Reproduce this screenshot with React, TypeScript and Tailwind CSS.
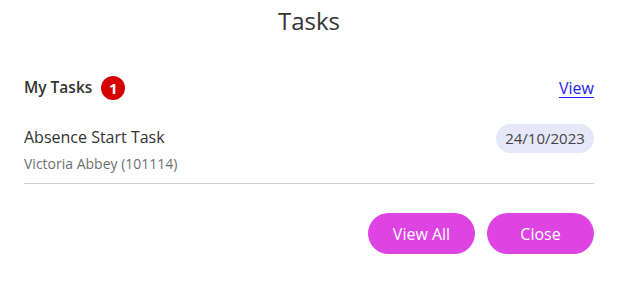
export default function App() {
  return (
    <div className="w-[618px] h-[294px] bg-white font-['Open_Sans',sans-serif] text-[#333]">
      <h2 className="pt-[4px] text-center text-[24px] leading-[34px] text-[#333]">Tasks</h2>

      <div className="mx-[24px] mt-[38px]">
        <div className="flex items-center justify-between h-[24px]">
          <div className="flex items-center">
            <span className="text-[15.5px] font-semibold text-[#333]">My Tasks</span>
            <span className="ml-[9px] flex h-[24px] w-[24px] items-center justify-center rounded-full bg-[#d40000] text-[15px] font-bold leading-none text-white">
              1
            </span>
          </div>
          <a href="#" className="text-[16px] text-[#2222ee] underline underline-offset-[3px]">
            View
          </a>
        </div>

        <div className="mt-[25px] flex items-start justify-between border-b border-[#cfcfcf] pb-[9px]">
          <div>
            <div className="text-[16px] leading-[24px] text-[#333]">Absence Start Task</div>
            <div className="mt-[5px] text-[14px] leading-[20px] text-[#6f6f6f]">Victoria Abbey (101114)</div>
          </div>
          <span className="-mt-[1px] flex h-[29px] w-[98px] items-center justify-center rounded-full bg-[#e6e8fa] text-[15px] text-[#444]">
            24/10/2023
          </span>
        </div>

        <div className="mt-[29px] flex justify-end gap-[12px]">
          <button className="h-[41px] w-[107px] rounded-full bg-[#dd44e2] text-[16px] text-white">View All</button>
          <button className="h-[41px] w-[107px] rounded-full bg-[#dd44e2] text-[16px] text-white">Close</button>
        </div>
      </div>
    </div>
  );
}
